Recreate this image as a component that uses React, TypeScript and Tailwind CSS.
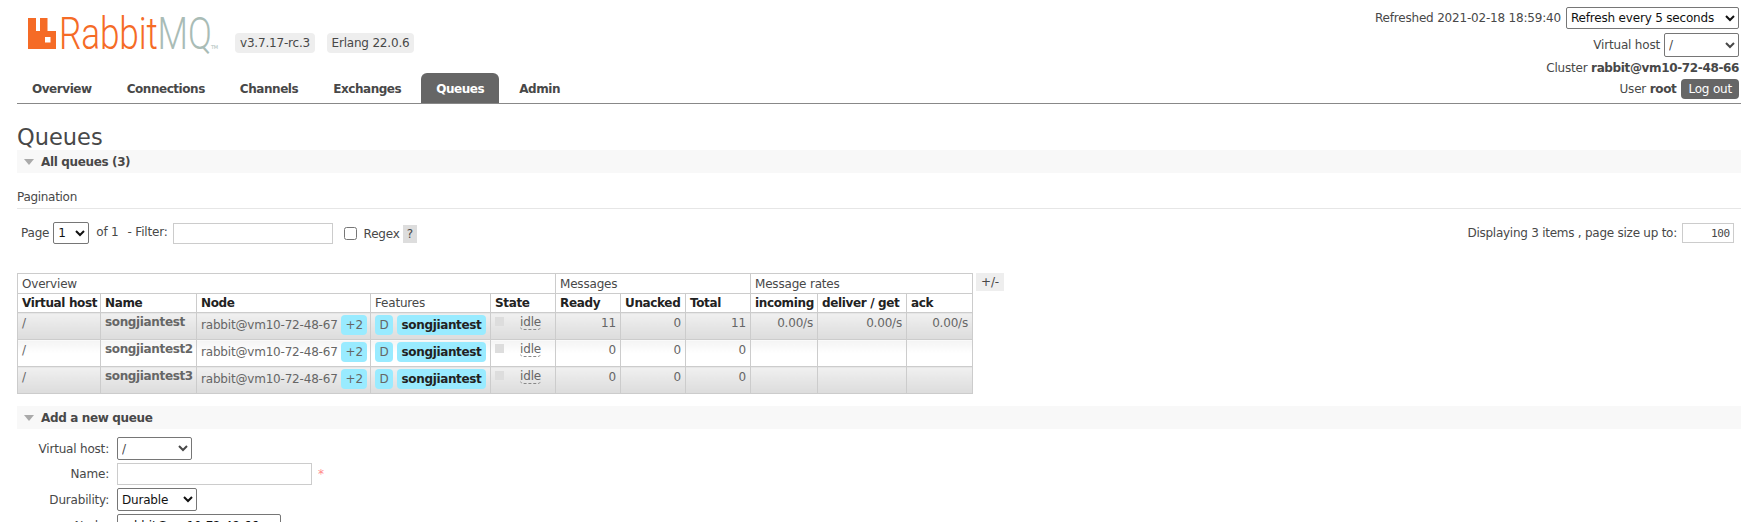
const nodeName = "rabbit@vm10-72-48-67";

const queues = [
  { name: "songjiantest", ready: "11", unacked: "0", total: "11", rate: "0.00/s", alt: true },
  { name: "songjiantest2", ready: "0", unacked: "0", total: "0", rate: "", alt: false },
  { name: "songjiantest3", ready: "0", unacked: "0", total: "0", rate: "", alt: true },
];

const tabs = ["Overview", "Connections", "Channels", "Exchanges", "Queues", "Admin"];

const bold = "font-bold tracking-[-0.36px]";
const th = `border border-[#ccc] px-[4px] h-[19px] text-left text-[#222] whitespace-nowrap ${bold}`;
const group = "border border-[#ccc] px-[4px] h-[20px] text-left font-normal text-[#484848]";
const pill = "inline-block rounded-[4px] bg-[#99ebff] leading-[20px]";

function Logo() {
  return (
    <div className="flex items-start">
      <svg width="28" height="31" viewBox="0 0 28 31" className="mt-[1px]">
        <path d="M0 0h8v13h4V0h7.5v13H28v18H0z" fill="#f56b26" />
        <rect x="17" y="19" width="5.5" height="5.5" fill="#fff" />
      </svg>
      <div className="ml-[3px] w-[151px]">
        <div className="origin-left scale-x-[0.8] whitespace-nowrap font-['Roboto'] text-[44px] font-light leading-[34px] text-[#f56b26]">
          Rabbit<span className="text-[#a9bcb6]">MQ</span>
        </div>
      </div>
      <span className="ml-[1px] mt-[27px] text-[5px] leading-[6px] text-[#a9bcb6]">TM</span>
    </div>
  );
}

function SectionBar({ title, className }: { title: string; className: string }) {
  return (
    <div className={`flex h-[23px] items-center bg-[#f8f8f8] pl-[7px] text-[#484848] ${bold} ${className}`}>
      <svg width="10" height="6" viewBox="0 0 10 6" className="mr-[7px]">
        <path d="M0 0h10L5 6z" fill="#aaa" />
      </svg>
      {title}
    </div>
  );
}

function QueueRow({ q }: { q: (typeof queues)[number] }) {
  const bg = q.alt ? "bg-linear-to-b from-[#f0f0f0] to-[#dcdcdc]" : "bg-linear-to-b from-[#f4f4f4] via-[#ffffff] to-[#ffffff]";
  const td = `border border-[#ccc] px-[4px] align-top text-[#666] ${bg}`;
  const num = `${td} text-right pt-[1px]`;
  return (
    <tr className="h-[27px]">
      <td className={`${td} pt-[1px]`}>/</td>
      <td className={`${td} pt-0 text-[#222] ${bold}`}>{q.name}</td>
      <td className={`${td} pt-[2px] whitespace-nowrap`}>
        {nodeName} <span className={`${pill} w-[26px] text-center`}>+2</span>
      </td>
      <td className={`${td} pt-[2px] whitespace-nowrap`}>
        <span className={`${pill} w-[18px] text-center`}>D</span>
        <span className={`${pill} ml-[4px] w-[89px] text-center text-[#222] ${bold}`}>songjiantest</span>
      </td>
      <td className={`${td} pt-[2px]`}>
        <div className="flex items-start justify-between pr-[10px]">
          <div className="mt-[2px] size-[9px] bg-[#ddd]" />
          <span className="rounded-b-[4px] border-b border-dashed border-[#888] leading-[14px]">idle</span>
        </div>
      </td>
      <td className={num}>{q.ready}</td>
      <td className={num}>{q.unacked}</td>
      <td className={num}>{q.total}</td>
      <td className={num}>{q.rate}</td>
      <td className={num}>{q.rate}</td>
      <td className={num}>{q.rate}</td>
    </tr>
  );
}

export default function App() {
  return (
    <div className="h-[522px] overflow-hidden bg-white font-['DejaVu_Sans',sans-serif] text-[12px] tracking-[-0.19px] text-[#484848]">
      {/* Header */}
      <div className="ml-[17px] flex h-[104px] justify-between border-b border-[#888]">
        <div className="flex flex-col justify-between">
          <div className="flex items-start pl-[11px] pt-[17px]">
            <Logo />
            <span className="ml-[17px] mt-[16px] w-[80px] rounded-[4px] bg-[#eee] text-center leading-[20px]">v3.7.17-rc.3</span>
            <span className="ml-[12px] mt-[16px] w-[87px] rounded-[4px] bg-[#eee] text-center leading-[20px]">Erlang 22.0.6</span>
          </div>
          <div className="flex h-[30px] gap-[5px]">
            {tabs.map((t) => (
              <div
                key={t}
                className={
                  t === "Queues"
                    ? "flex w-[78px] items-center justify-center rounded-t-[6px] bg-[#666] pt-[1px] font-bold tracking-[-0.45px] text-white"
                    : "flex items-center justify-center px-[15px] pt-[1px] font-bold tracking-[-0.45px] text-[#484848]"
                }
              >
                {t}
              </div>
            ))}
          </div>
        </div>
        <div className="flex flex-col items-end pr-[2px] pt-[7px]">
          <div className="flex h-[22px] items-center gap-[5px]">
            Refreshed 2021-02-18 18:59:40
            <select className="h-[22px] w-[173px] rounded-[2px] border border-[#767676] text-[#111]">
              <option>Refresh every 5 seconds</option>
            </select>
          </div>
          <div className="mt-[4px] flex h-[24px] items-center gap-[4px]">
            Virtual host
            <select className="h-[24px] w-[75px] rounded-[2px] border border-[#767676] text-[#484848]">
              <option>/</option>
            </select>
          </div>
          <div className="mt-[1px] leading-[20px]">
            Cluster <b className={bold}>rabbit@vm10-72-48-66</b>
          </div>
          <div className="mt-[1px] flex h-[20px] items-center gap-[5px]">
            <span>
              User <b className={bold}>root</b>
            </span>
            <span className="rounded-[4px] bg-[#666] px-[7px] leading-[20px] text-white">Log out</span>
          </div>
        </div>
      </div>

      {/* Main */}
      <div className="pl-[17px]">
        <h1 className="mt-[21px] text-[22.5px] leading-[24px] tracking-normal">Queues</h1>
        <SectionBar title="All queues (3)" className="mt-[1px]" />

        <div className="mt-[16px] border-b border-[#e6e6e6] pb-[3px] leading-[16px] tracking-[-0.3px]">Pagination</div>

        <div className="mt-[13px] flex h-[22px] items-center justify-between pl-[4px] pr-[7px]">
          <div className="flex items-center">
            Page
            <select className="ml-[4px] h-[22px] w-[36px] rounded-[2px] border border-[#767676] text-[#111]">
              <option>1</option>
            </select>
            <span className="ml-[7px] -mt-[2px]">of 1</span>
            <span className="ml-[9px] -mt-[2px]">- Filter:</span>
            <input className="ml-[5px] h-[21px] w-[160px] border border-[#ccc]" />
            <input type="checkbox" className="ml-[11px] size-[13px]" />
            <span className="ml-[7px] mt-[1px]">Regex</span>
            <span className="ml-[3px] mt-[1px] bg-[#ddd] px-[4px] leading-[18px]">?</span>
          </div>
          <div className="flex items-center gap-[5px] tracking-[-0.25px]">
            Displaying 3 items , page size up to:
            <input
              readOnly
              value="100"
              className="h-[20px] w-[52px] border border-[#ccc] pr-[3px] text-right font-['DejaVu_Sans_Mono',monospace] text-[11px]"
            />
          </div>
        </div>

        {/* Queue table */}
        <div className="mt-[29px] flex items-start">
          <table className="w-[955px] table-fixed border-collapse">
            <colgroup>
              <col className="w-[83px]" />
              <col className="w-[96px]" />
              <col className="w-[174px]" />
              <col className="w-[120px]" />
              <col className="w-[65px]" />
              <col className="w-[65px]" />
              <col className="w-[65px]" />
              <col className="w-[65px]" />
              <col className="w-[67px]" />
              <col className="w-[89px]" />
              <col className="w-[66px]" />
            </colgroup>
            <thead>
              <tr>
                <th colSpan={5} className={group}>Overview</th>
                <th colSpan={3} className={group}>Messages</th>
                <th colSpan={3} className={group}>Message rates</th>
              </tr>
              <tr>
                <th className={th}>Virtual host</th>
                <th className={th}>Name</th>
                <th className={th}>Node</th>
                <th className="h-[19px] border border-[#ccc] px-[4px] text-left font-normal text-[#484848]">Features</th>
                <th className={th}>State</th>
                <th className={th}>Ready</th>
                <th className={th}>Unacked</th>
                <th className={th}>Total</th>
                <th className={th}>incoming</th>
                <th className={th}>deliver / get</th>
                <th className={th}>ack</th>
              </tr>
            </thead>
            <tbody>
              {queues.map((q) => (
                <QueueRow key={q.name} q={q} />
              ))}
            </tbody>
          </table>
          <span className="ml-[3px] bg-[#eee] px-[5px] leading-[18px]">+/-</span>
        </div>

        <SectionBar title="Add a new queue" className="mt-[12px]" />

        {/* Add queue form */}
        <div className="mt-[8px] grid grid-cols-[92px_1fr] items-center gap-x-[8px] gap-y-[3px]">
          <label className="text-right">Virtual host:</label>
          <select className="h-[23px] w-[75px] rounded-[2px] border border-[#767676]">
            <option>/</option>
          </select>
          <label className="text-right">Name:</label>
          <div className="flex items-center">
            <input className="h-[22px] w-[195px] border border-[#ccc]" />
            <span className="ml-[6px] text-[#f88]">*</span>
          </div>
          <label className="text-right">Durability:</label>
          <select className="h-[23px] w-[80px] rounded-[2px] border border-[#767676] text-[#111]">
            <option>Durable</option>
          </select>
          <label className="text-right">Node:</label>
          <select className="h-[23px] w-[164px] rounded-[2px] border border-[#767676] text-[#111]">
            <option>rabbit@vm10-72-48-66</option>
          </select>
        </div>
      </div>
    </div>
  );
}
